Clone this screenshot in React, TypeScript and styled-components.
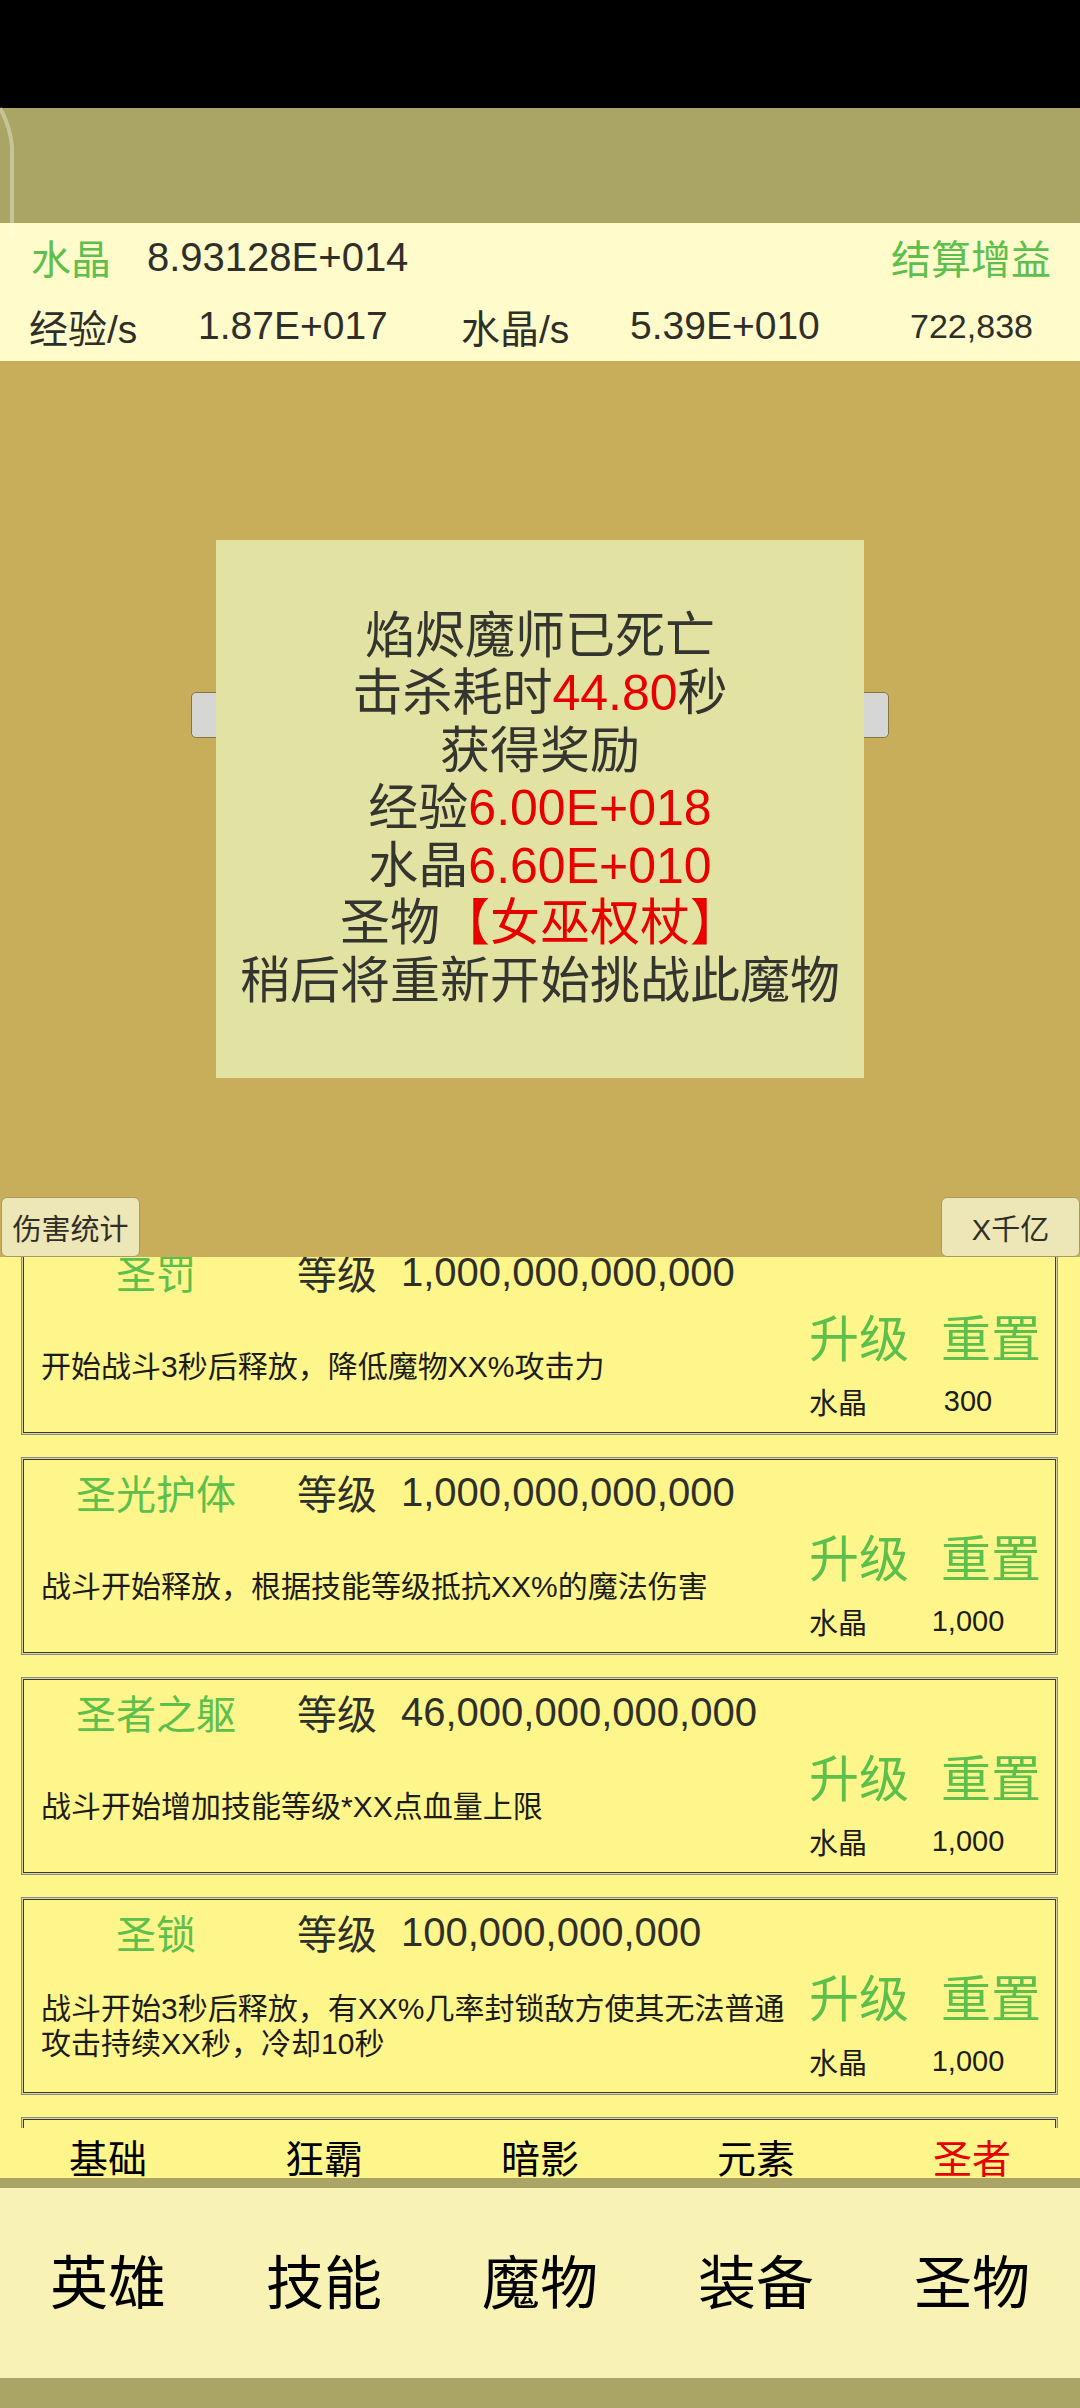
import styled, { createGlobalStyle } from 'styled-components';

const GlobalStyle = createGlobalStyle`
  html, body {
    margin: 0;
    padding: 0;
    background: #000;
  }
  * {
    box-sizing: border-box;
  }
  body {
    font-family: 'Liberation Sans', 'Noto Sans CJK SC', sans-serif;
  }
`;

const Screen = styled.div`
  width: 1080px;
  height: 2408px;
  display: flex;
  flex-direction: column;
  overflow: hidden;
  color: #2f2f2a;
`;

const StatusBar = styled.div`
  height: 108px;
  background: #000;
`;

const TopStrip = styled.div`
  position: relative;
  height: 115px;
  background: #aaa564;
`;

const EdgeGlare = styled.svg`
  position: absolute;
  left: 0;
  top: -40px;
  width: 20px;
  height: 170px;
`;

const InfoBar = styled.div`
  height: 138px;
  background: #fffbcb;
  display: flex;
  flex-direction: column;
`;

const InfoRowTop = styled.div`
  height: 68px;
  display: flex;
  align-items: center;
  padding: 0 29px 0 31px;
  font-size: 40px;
`;

const InfoRowBottom = styled.div`
  height: 70px;
  display: grid;
  grid-template-columns: 169px 263px 169px 280px 123px;
  align-items: center;
  padding-left: 29px;
  font-size: 39px;
  white-space: nowrap;
`;

const GreenText = styled.span<{ $w?: number }>`
  color: #5dbf4c;
  width: ${(p) => (p.$w ? `${p.$w}px` : 'auto')};
`;

const Spacer = styled.div`
  flex: 1;
`;

const Count = styled.span`
  font-size: 34px;
  text-align: center;
`;

const Battle = styled.div`
  position: relative;
  height: 896px;
  background: #c8ae5a;
  display: flex;
  flex-direction: column;
  align-items: center;
`;

const HpBar = styled.div`
  margin-top: 331px;
  width: 698px;
  height: 46px;
  background: #d6d6d4;
  border: 1px solid #85763f;
  border-radius: 5px;
`;

const BattleButtons = styled.div`
  margin-top: auto;
  width: 100%;
  display: flex;
  justify-content: space-between;
  padding-left: 1px;
`;

const SceneButton = styled.button`
  width: 139px;
  height: 60px;
  background: #ede6b6;
  border: 1px solid #a79a63;
  border-radius: 6px;
  font-family: inherit;
  font-size: 29px;
  color: #2f2f28;
  padding: 0;
`;

const ResultModal = styled.div`
  position: absolute;
  left: 216px;
  top: 179px;
  width: 648px;
  height: 538px;
  background: #e2e3a2;
  display: flex;
  flex-direction: column;
  align-items: center;
  justify-content: center;
  font-size: 50px;
  line-height: 57.5px;
  color: #353530;
  white-space: nowrap;
`;

const Red = styled.span`
  color: #e80000;
`;

const ListViewport = styled.div`
  height: 871px;
  overflow: hidden;
  background: #fff68b;
  padding: 0 22px 0 21px;
`;

const ListScroll = styled.div`
  margin-top: -20px;
  display: flex;
  flex-direction: column;
  gap: 22px;
`;

const Card = styled.div`
  height: 198px;
  border: 1px solid #8c8b7c;
  box-shadow: inset 0 0 0 1px #d8d5a8, inset 0 0 0 2px #3a3932;
  padding: 2px;
  display: flex;
  flex-direction: column;
`;

const CardHeader = styled.div`
  height: 64px;
  display: flex;
  align-items: center;
  font-size: 40px;
  white-space: nowrap;
`;

const SkillName = styled.span`
  width: 264px;
  text-align: center;
  color: #5dbf4c;
`;

const LevelLabel = styled.span`
  margin-left: 9px;
  width: 104px;
`;

const CardBody = styled.div`
  flex: 1;
  display: flex;
`;

const Desc = styled.div`
  flex: 1;
  display: flex;
  align-items: center;
  padding: 0 0 4px 17px;
  font-size: 30px;
  line-height: 35px;
  color: #1c1c18;
  white-space: pre-line;
`;

const Actions = styled.div`
  width: 246px;
  display: flex;
  flex-direction: column;
`;

const ActionRow = styled.div`
  height: 62px;
  display: flex;
  align-items: center;
  gap: 32px;
  font-size: 50px;
  color: #5dbf4c;
`;

const PriceRow = styled.div`
  margin-top: 5px;
  height: 60px;
  display: flex;
  align-items: center;
  font-size: 29px;
  color: #1c1c18;
`;

const PriceLabel = styled.span`
  width: 111px;
`;

const PriceValue = styled.span`
  width: 96px;
  text-align: center;
`;

const TabRow = styled.div<{ $h: number; $size: number; $bg: string; $lift?: number }>`
  height: ${(p) => p.$h}px;
  background: ${(p) => p.$bg};
  display: grid;
  grid-template-columns: repeat(5, 1fr);
  align-items: center;
  padding-bottom: ${(p) => p.$lift ?? 0}px;
  font-size: ${(p) => p.$size}px;
`;

const Tab = styled.div<{ $active?: boolean }>`
  text-align: center;
  color: ${(p) => (p.$active ? '#e60000' : '#000')};
`;

const OliveBand = styled.div<{ $h: number }>`
  height: ${(p) => p.$h}px;
  background: #aaa564;
`;

const skills = [
  { name: '圣罚', level: '1,000,000,000,000', desc: '开始战斗3秒后释放，降低魔物XX%攻击力', price: '300' },
  { name: '圣光护体', level: '1,000,000,000,000', desc: '战斗开始释放，根据技能等级抵抗XX%的魔法伤害', price: '1,000' },
  { name: '圣者之躯', level: '46,000,000,000,000', desc: '战斗开始增加技能等级*XX点血量上限', price: '1,000' },
  {
    name: '圣锁',
    level: '100,000,000,000',
    desc: '战斗开始3秒后释放，有XX%几率封锁敌方使其无法普通\n攻击持续XX秒，冷却10秒',
    price: '1,000',
  },
  { name: '圣愈', level: '1,000,000,000', desc: '', price: '1,000' },
];

const subTabs = ['基础', '狂霸', '暗影', '元素', '圣者'];
const mainTabs = ['英雄', '技能', '魔物', '装备', '圣物'];

export default function App() {
  return (
    <>
      <GlobalStyle />
      <Screen>
        <StatusBar />
        <TopStrip>
          <EdgeGlare viewBox="0 0 20 170">
            <path
              d="M0 40 Q10 58 12 78 L12 170"
              fill="none"
              stroke="rgba(255,255,240,0.35)"
              strokeWidth="4"
            />
          </EdgeGlare>
        </TopStrip>
        <InfoBar>
          <InfoRowTop>
            <GreenText $w={116}>水晶</GreenText>
            <span>8.93128E+014</span>
            <Spacer />
            <GreenText>结算增益</GreenText>
          </InfoRowTop>
          <InfoRowBottom>
            <span>经验/s</span>
            <span>1.87E+017</span>
            <span>水晶/s</span>
            <span>5.39E+010</span>
            <Count>722,838</Count>
          </InfoRowBottom>
        </InfoBar>
        <Battle>
          <HpBar />
          <BattleButtons>
            <SceneButton>伤害统计</SceneButton>
            <SceneButton>X千亿</SceneButton>
          </BattleButtons>
          <ResultModal>
            <div>焰烬魔师已死亡</div>
            <div>
              击杀耗时<Red>44.80</Red>秒
            </div>
            <div>获得奖励</div>
            <div>
              经验<Red>6.00E+018</Red>
            </div>
            <div>
              水晶<Red>6.60E+010</Red>
            </div>
            <div>
              圣物<Red>【女巫权杖】</Red>
            </div>
            <div>稍后将重新开始挑战此魔物</div>
          </ResultModal>
        </Battle>
        <ListViewport>
          <ListScroll>
            {skills.map((s) => (
              <Card key={s.name}>
                <CardHeader>
                  <SkillName>{s.name}</SkillName>
                  <LevelLabel>等级</LevelLabel>
                  <span>{s.level}</span>
                </CardHeader>
                <CardBody>
                  <Desc>{s.desc}</Desc>
                  <Actions>
                    <ActionRow>
                      <span>升级</span>
                      <span>重置</span>
                    </ActionRow>
                    <PriceRow>
                      <PriceLabel>水晶</PriceLabel>
                      <PriceValue>{s.price}</PriceValue>
                    </PriceRow>
                  </Actions>
                </CardBody>
              </Card>
            ))}
          </ListScroll>
        </ListViewport>
        <TabRow $h={50} $size={39} $bg="#fff68b" $lift={6}>
          {subTabs.map((t) => (
            <Tab key={t} $active={t === '圣者'}>
              {t}
            </Tab>
          ))}
        </TabRow>
        <OliveBand $h={10} />
        <TabRow $h={190} $size={58} $bg="#f8f2b4" $lift={8}>
          {mainTabs.map((t) => (
            <Tab key={t}>{t}</Tab>
          ))}
        </TabRow>
        <OliveBand $h={30} />
      </Screen>
    </>
  );
}
